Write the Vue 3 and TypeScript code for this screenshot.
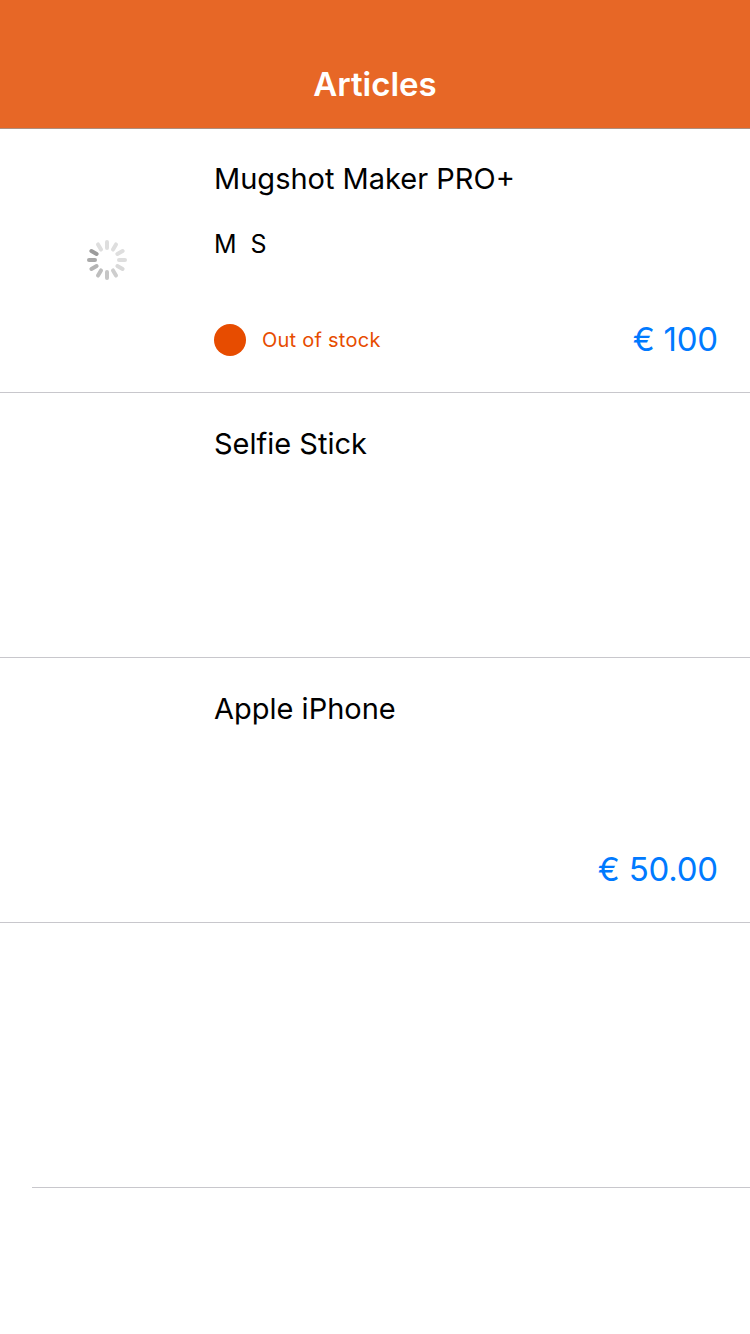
<script setup lang="ts">
interface Article {
  title: string
  variants?: string[]
  stock?: string
  price?: string
  loading?: boolean
}

const articles: Article[] = [
  { title: 'Mugshot Maker PRO+', variants: ['M', 'S'], stock: 'Out of stock', price: '€ 100', loading: true },
  { title: 'Selfie Stick' },
  { title: 'Apple iPhone', price: '€ 50.00' },
]

const spokes: string[] = [
  '#dedede', '#dedede', '#dedede', '#dedede', '#d9d9d9', '#cecece',
  '#c6c6c6', '#bebebe', '#b4b4b4', '#aaaaaa', '#9c9c9c', '#dedede',
]
</script>

<template>
  <div class="screen">
    <header class="navbar"><h1>Articles</h1></header>
    <main>
      <article v-for="item in articles" :key="item.title" class="row">
        <div class="thumb">
          <svg v-if="item.loading" width="40" height="40" viewBox="-20 -20 40 40">
            <line
              v-for="(color, i) in spokes" :key="i" x1="0" y1="-18" x2="0" y2="-12"
              :stroke="color" stroke-width="4" stroke-linecap="round" :transform="`rotate(${i * 30})`"
            />
          </svg>
        </div>
        <div class="body">
          <h2>{{ item.title }}</h2>
          <div class="variants"><span v-for="v in item.variants" :key="v">{{ v }}</span></div>
          <div class="foot">
            <div v-if="item.stock" class="stock"><i class="dot"></i><span>{{ item.stock }}</span></div>
            <span v-if="item.price" class="price">{{ item.price }}</span>
          </div>
        </div>
      </article>
      <div class="empty"></div>
    </main>
  </div>
</template>

<style>
body { margin: 0; background: #fff; }
</style>

<style scoped>
.screen { width: 750px; height: 1334px; overflow: hidden; background: #fff; color: #000; font-family: Inter, "Liberation Sans", sans-serif; }
.navbar { box-sizing: border-box; height: 129px; margin-bottom: -1px; padding-top: 39px; background: #e76726; border-bottom: 1px solid #ad8e7e; display: flex; align-items: center; justify-content: center; }
h1 { margin: 0; color: #fff; font-size: 33px; line-height: 40px; font-weight: 600; }
.row { box-sizing: border-box; height: 265px; display: flex; border-bottom: 1px solid #c8c7cc; }
.thumb { width: 214px; display: flex; align-items: center; justify-content: center; }
.body { flex: 1; display: flex; flex-direction: column; padding: 31px 32px 32px 0; }
h2 { margin: 0; font-size: 29px; line-height: 40px; font-weight: 400; }
.variants { display: flex; gap: 14px; margin-top: 25px; font-size: 25px; line-height: 40px; }
.foot { margin-top: auto; height: 40px; display: flex; align-items: center; }
.stock { display: flex; align-items: center; gap: 16px; color: #e74c00; font-size: 20px; letter-spacing: 0.25px; }
.dot { width: 32px; height: 32px; border-radius: 50%; background: #e74c00; }
.price { margin-left: auto; padding-bottom: 2px; color: #007aff; font-size: 33px; line-height: 38px; letter-spacing: -0.2px; }
.empty { box-sizing: border-box; height: 265px; margin-left: 32px; border-bottom: 1px solid #c8c7cc; }
</style>
